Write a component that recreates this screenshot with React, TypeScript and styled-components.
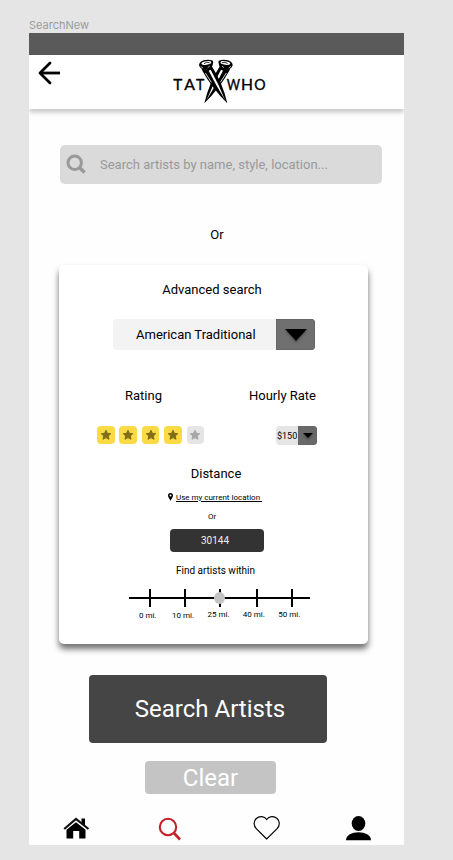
import React from "react";
import styled, { createGlobalStyle } from "styled-components";

const Global = createGlobalStyle`
  * { box-sizing: border-box; }
  body { margin: 0; background: #e5e5e5; font-family: Roboto, "Liberation Sans", sans-serif; color: #000; }
  button { font-family: inherit; border: 0; padding: 0; }
  svg { display: block; flex: none; }
`;

const Canvas = styled.div`
  width: 453px;
  height: 860px;
  padding: 18px 0 0 29px;
  background: #e5e5e5;
  overflow: hidden;
`;
const FrameName = styled.div`
  height: 15px;
  font: 11px/15px Inter, sans-serif;
  color: #9b9b9b;
`;
const Phone = styled.main`
  width: 375px;
  height: 812px;
  display: flex;
  flex-direction: column;
  background: #fefefe;
  overflow: hidden;
`;
const StatusBar = styled.div`
  height: 22px;
  flex: none;
  background: #5a5a5a;
`;
const Header = styled.header`
  height: 54px;
  flex: none;
  display: flex;
  padding-left: 8px;
  background: #fff;
  box-shadow: 0 3px 5px rgba(0, 0, 0, 0.24);
`;
const BackButton = styled.button`
  width: 123px;
  height: 36px;
  background: none;
`;
const SearchField = styled.div`
  display: flex;
  align-items: center;
  flex: none;
  width: 322px;
  height: 39px;
  margin: 36px 0 0 31px;
  padding-left: 6px;
  gap: 13px;
  border-radius: 5px;
  background: #dadada;
  color: #999;
  font-size: 13px;
`;
const Label = styled.div<{ $size?: number; $height?: number; $top?: number; $shift?: number }>`
  flex: none;
  margin-top: ${(p) => p.$top ?? 0}px;
  padding-left: ${(p) => p.$shift ?? 0}px;
  text-align: center;
  font-size: ${(p) => p.$size ?? 13}px;
  line-height: ${(p) => p.$height ?? 16}px;
  white-space: nowrap;
`;
const Card = styled.section`
  display: flex;
  flex-direction: column;
  flex: none;
  width: 309px;
  height: 379px;
  margin: 22px 0 0 30px;
  padding-top: 17px;
  border-radius: 5px;
  background: #fff;
  box-shadow: 0 5px 6px rgba(0, 0, 0, 0.56);
`;
const LeftLabel = styled(Label)`
  padding-right: 3px;
`;
const Select = styled.div<{ $small?: boolean }>`
  display: flex;
  flex: none;
  overflow: hidden;
  width: ${(p) => (p.$small ? 41 : 202)}px;
  height: ${(p) => (p.$small ? 19 : 31)}px;
  margin: ${(p) => (p.$small ? "0 0 1px" : "21px 0 0 54px")};
  border-radius: 4px;
  background: ${(p) => (p.$small ? "#e5e5e5" : "#f3f3f3")};
  font-size: ${(p) => (p.$small ? 9 : 13)}px;
`;
const SelectValue = styled.div<{ $small?: boolean }>`
  flex: 1;
  display: flex;
  align-items: center;
  padding-left: ${(p) => (p.$small ? 1 : 23)}px;
  padding-top: ${(p) => (p.$small ? 1 : 0)}px;
  white-space: nowrap;
`;
const SelectArrow = styled.div<{ $small?: boolean }>`
  width: ${(p) => (p.$small ? 19 : 39)}px;
  display: flex;
  align-items: center;
  justify-content: center;
  background: ${(p) => (p.$small ? "#696969" : "#707070")};
  border: 1px solid #666;
  svg { filter: drop-shadow(0 2px 1px rgba(0, 0, 0, 0.25)); }
`;
const FilterTitles = styled.div`
  display: flex;
  justify-content: space-between;
  margin-top: 38px;
  padding: 0 52px 0 66px;
  font-size: 13px;
  line-height: 16px;
`;
const FilterControls = styled.div`
  display: flex;
  justify-content: space-between;
  align-items: center;
  height: 20px;
  margin-top: 22px;
  padding: 0 51px 0 38px;
`;
const Stars = styled.div`
  display: flex;
  gap: 4.9px;
`;
const StarBox = styled.div<{ $on: boolean }>`
  width: 17.5px;
  height: 18px;
  margin-top: -2px;
  display: grid;
  place-items: center;
  border-radius: 4px;
  background: ${(p) => (p.$on ? "#fada45" : "#e5e5e5")};
  color: ${(p) => (p.$on ? "#806d17" : "#a6a6a6")};
`;
const LocationLink = styled.a`
  display: flex;
  justify-content: center;
  align-items: center;
  gap: 3px;
  height: 10px;
  margin: 10px 0 0 3px;
  font-size: 8px;
  color: #000;
  white-space: pre;
  span { text-decoration: underline; }
`;
const ZipField = styled.div`
  display: grid;
  place-items: center;
  flex: none;
  width: 94px;
  height: 23px;
  margin: 7px 0 0 111px;
  padding-right: 4px;
  border-radius: 4px;
  background: #333;
  color: #eee;
  font-size: 10px;
`;
const Slider = styled.div`
  width: 181px;
  margin: 11px 0 0 70px;
`;
const Ticks = styled.div`
  display: flex;
  margin-top: 2px;
  padding-left: 1px;
  font-size: 8px;
  line-height: 12px;
`;
const Tick = styled.span<{ $raised?: boolean }>`
  width: 35.4px;
  flex: none;
  text-align: center;
  white-space: nowrap;
  margin-top: ${(p) => (p.$raised ? -1 : 0)}px;
`;
const ActionButton = styled.button<{ $primary?: boolean }>`
  flex: none;
  width: ${(p) => (p.$primary ? 238 : 131)}px;
  height: ${(p) => (p.$primary ? 68 : 33)}px;
  margin: ${(p) => (p.$primary ? "31px 0 0 60px" : "18px 0 0 116px")};
  padding-left: ${(p) => (p.$primary ? 4 : 0)}px;
  border-radius: 4px;
  background: ${(p) => (p.$primary ? "#454545" : "#c4c4c4")};
  color: #fff;
  font-size: 24px;
`;
const Nav = styled.nav`
  display: grid;
  grid-template-columns: 95px 95px 92px 27px;
  margin-top: 20px;
  padding-left: 34px;
`;

const Nail = () => (
  <g>
    <path d="M124 54 L137 59 L155 48 Q187 96 202 160 Q155 113 127 62Z" fill="#000" />
    <path d="M146 62 Q168 106 195 150 Q176 102 152 59Z" fill="#fff" />
    <path d="M136 69 L154 97" stroke="#fff" strokeWidth="2.5" />
    <path d="M117 46 Q117 34 135 30 Q156 27 160 35 Q159 48 152 54 L138 60 Q121 59 117 46Z" fill="#000" />
    <ellipse cx="139" cy="39" rx="15" ry="5" transform="rotate(-10 139 39)" fill="#fff" />
    <path d="M132 41 L140 37 L149 38" stroke="#000" strokeWidth="2.5" fill="none" />
    <path d="M122 49 L129 54 M143 53 L149 48" stroke="#fff" strokeWidth="2" />
  </g>
);

const Logo = () => (
  <svg width="120" height="54" viewBox="0 15 360 162">
    <g transform="translate(335 0) scale(-1 1)"><Nail /></g>
    <Nail />
    <g fontFamily="Lato, sans-serif" fontWeight="400" fontSize="43" fill="#000" stroke="#000" strokeWidth="1" strokeLinejoin="round">
      <text x="40" y="121" textLength="27" lengthAdjust="spacingAndGlyphs">T</text>
      <text x="73" y="121" textLength="32" lengthAdjust="spacingAndGlyphs">A</text>
      <text x="108" y="121" textLength="25" lengthAdjust="spacingAndGlyphs">T</text>
      <text x="200" y="121" textLength="40" lengthAdjust="spacingAndGlyphs">W</text>
      <text x="243" y="121" textLength="36" lengthAdjust="spacingAndGlyphs">H</text>
      <text x="283" y="121" textLength="34" lengthAdjust="spacingAndGlyphs">O</text>
    </g>
  </svg>
);

const Caret = ({ w, h }: { w: number; h: number }) => (
  <svg width={w} height={h} viewBox="0 0 22 12" preserveAspectRatio="none"><path d="M0 0H22L11 12Z" /></svg>
);

const Star = () => (
  <svg width="12" height="12" viewBox="0 0 24 24">
    <path d="M12 2.5 14.8 8.7 21.5 9.4 16.5 13.9 18 20.6 12 17.2 6 20.6 7.5 13.9 2.5 9.4 9.2 8.7Z" fill="currentColor" stroke="currentColor" strokeWidth="2" strokeLinejoin="round" />
  </svg>
);

const tickX = [21, 56, 91, 128, 163];
const miles = ["0 mi.", "10 mi.", "25 mi.", "40 mi.", "50 mi."];

export default function App() {
  return (
    <Canvas>
      <Global />
      <FrameName>SearchNew</FrameName>
      <Phone>
        <StatusBar />
        <Header>
          <BackButton aria-label="Back">
            <svg width="26" height="36" viewBox="0 0 26 36" fill="none" stroke="#000" strokeWidth="2.8">
              <path d="M23 18H3" />
              <path d="M13 8 3 18 13 28" strokeLinecap="round" strokeLinejoin="round" />
            </svg>
          </BackButton>
          <Logo />
        </Header>
        <SearchField>
          <svg width="21" height="21" viewBox="0 0 21 21" fill="none" stroke="#999">
            <circle cx="8.7" cy="8.7" r="6.7" strokeWidth="3" />
            <path d="m13.4 13.4 5.2 5.2" strokeWidth="3.6" />
          </svg>
          <span>Search artists by name, style, location...</span>
        </SearchField>
        <Label $top={43} $shift={1}>Or</Label>
        <Card>
          <LeftLabel>Advanced search</LeftLabel>
          <Select>
            <SelectValue>American Traditional</SelectValue>
            <SelectArrow><Caret w={22} h={12} /></SelectArrow>
          </Select>
          <FilterTitles><span>Rating</span><span>Hourly Rate</span></FilterTitles>
          <FilterControls>
            <Stars>
              {[1, 2, 3, 4, 5].map((n) => <StarBox key={n} $on={n < 5}><Star /></StarBox>)}
            </Stars>
            <Select $small>
              <SelectValue $small>$150</SelectValue>
              <SelectArrow $small><Caret w={10} h={5} /></SelectArrow>
            </Select>
          </FilterControls>
          <Label $top={20} $shift={5}>Distance</Label>
          <LocationLink>
            <svg width="5" height="8" viewBox="0 0 10 16">
              <path fillRule="evenodd" d="M5 0a5 5 0 0 1 5 5c0 3-3 6-5 11C3 11 0 8 0 5a5 5 0 0 1 5-5Zm0 3a2 2 0 1 0 0 4 2 2 0 0 0 0-4Z" />
            </svg>
            <span>Use my current location </span>
          </LocationLink>
          <LeftLabel $size={8} $height={10} $top={10}>Or</LeftLabel>
          <ZipField>30144</ZipField>
          <Label $size={10} $height={12} $top={13} $shift={4}>Find artists within</Label>
          <Slider>
            <svg width="181" height="20" viewBox="0 0 181 20">
              <path d="M0 10H181" stroke="#000" strokeWidth="2" />
              {tickX.map((x) => <path key={x} d={`M${x} 1V19`} stroke="#000" strokeWidth="2" />)}
              <ellipse cx="90.5" cy="10" rx="5.5" ry="6" fill="#c4c4c4" />
            </svg>
            <Ticks>{miles.map((m, i) => <Tick key={m} $raised={i > 1}>{m}</Tick>)}</Ticks>
          </Slider>
        </Card>
        <ActionButton $primary>Search Artists</ActionButton>
        <ActionButton>Clear</ActionButton>
        <Nav>
          <svg width="28" height="29" viewBox="0 0 28 29">
            <path d="M3.5 15.8 13 8.2 22.5 15.8V24.5H16.2V17H10.2V24.5H3.5Z" />
            <path d="M1.200 15 13 5 25.500 15" fill="none" stroke="#111" strokeWidth="2.200" />
            <path d="M18.500 4.500H22V11.500L18.500 8.500Z" />
          </svg>
          <svg width="26" height="29" viewBox="0 0 26 29" fill="none" stroke="#c12228">
            <circle cx="10" cy="13" r="8.200" strokeWidth="2.100" />
            <path d="m15.500 18.500 6.500 7" strokeWidth="2.600" />
          </svg>
          <svg width="28" height="29" viewBox="0 0 28 29" fill="none" stroke="#000" strokeWidth="1.200">
            <path d="M13.700 25 3.500 14.800C.2 11.500.6 7 3.300 4.500 6.500 1.700 11.500 2.200 13.700 5.500 16 2.200 20.900 1.700 24.100 4.500 26.900 7 27.200 11.500 23.900 14.800Z" />
          </svg>
          <svg width="27" height="29" viewBox="0 0 27 29">
            <ellipse cx="13.500" cy="9.500" rx="6.800" ry="7.500" />
            <path d="M1 26.300C1 21 7 18.300 13.500 18.300S26 21 26 26.300Z" />
          </svg>
        </Nav>
      </Phone>
    </Canvas>
  );
}
